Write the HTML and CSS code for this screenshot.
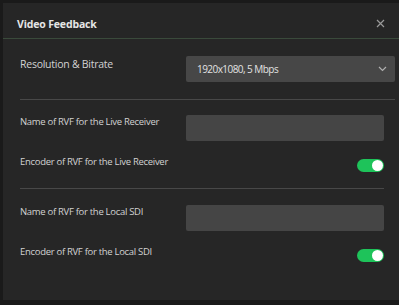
FILE: index.html
```html
<!DOCTYPE html>
<html>
<head>
<meta charset="utf-8">
<link rel="stylesheet" href="styles.css">
</head>
<body>
<div class="dialog">
  <div class="header">
    <span class="title">Video Feedback</span>
    <svg class="close" width="9" height="9" viewBox="0 0 9 9"><path d="M1 1L8 8M8 1L1 8" stroke="#9a9a9a" stroke-width="1.2" fill="none"/></svg>
  </div>
  <div class="section first">
    <div class="row">
      <span class="label big">Resolution &amp; Bitrate</span>
      <div class="select">
        <span>1920x1080, 5 Mbps</span>
        <svg width="9" height="6" viewBox="0 0 9 6"><path d="M1 1L4.5 4.5L8 1" stroke="#b0b0b0" stroke-width="1.2" fill="none"/></svg>
      </div>
    </div>
  </div>
  <div class="section">
    <div class="row">
      <span class="label">Name of RVF for the Live Receiver</span>
      <div class="input"></div>
    </div>
    <div class="row enc">
      <span class="label">Encoder of RVF for the Live Receiver</span>
      <div class="toggle"><div class="knob"></div></div>
    </div>
  </div>
  <div class="section last">
    <div class="row">
      <span class="label">Name of RVF for the Local SDI</span>
      <div class="input"></div>
    </div>
    <div class="row enc">
      <span class="label">Encoder of RVF for the Local SDI</span>
      <div class="toggle"><div class="knob"></div></div>
    </div>
  </div>
</div>
</body>
</html>
```
FILE: styles.css
```css
html, body {
  margin: 0;
  padding: 0;
  background: #1a1a1a;
  width: 399px;
  height: 305px;
  overflow: hidden;
  font-family: "Open Sans", "Noto Sans", sans-serif;
}
.dialog {
  margin: 3px 0 0 3px;
  width: 396px;
  height: 297px;
  background: #262626;
  box-sizing: border-box;
}
.header {
  border-bottom: 1px solid #3a4a3b;
  display: flex;
  align-items: center;
  justify-content: space-between;
  padding: 6px 14px 0 14px;
  box-sizing: border-box;
  height: 36px;
}
.title {
  color: #e6e6e6;
  font-weight: 700;
  font-size: 10.5px;
  letter-spacing: -0.15px;
}
.close { display: block; }
.section {
  margin: 0 15px 0 17px;
  padding: 15px 0 16px;
  border-bottom: 1px solid #484848;
}
.section.first { padding: 17px 0 17px; margin-right: 4px; }
.section.last { border-bottom: none; padding-top: 16px; }
.row {
  display: flex;
  justify-content: space-between;
  align-items: flex-start;
}
.row.enc { margin-top: 14px; }
.label {
  color: #d2d2d2;
  font-size: 9.5px;
  letter-spacing: -0.3px;
  line-height: 14px;
}
.label.big {
  font-size: 10.5px;
  letter-spacing: -0.25px;
  line-height: 16px;
}
.select {
  width: 209px;
  height: 26px;
  background: #474747;
  border-radius: 2px;
  display: flex;
  align-items: center;
  justify-content: space-between;
  padding: 0 8px 0 11px;
  box-sizing: border-box;
  color: #e2e2e2;
  font-size: 10px;
  letter-spacing: -0.55px;
}
.select svg { display: block; }
.input {
  width: 198px;
  height: 26px;
  background: #454545;
  border-radius: 2px;
}
.toggle {
  width: 27px;
  height: 13px;
  margin-top: 4px;
  background: #1ec35a;
  border-radius: 7px;
  display: flex;
  justify-content: flex-end;
  align-items: center;
  padding: 0 1px;
  box-sizing: border-box;
}
.knob {
  width: 11px;
  height: 11px;
  border-radius: 50%;
  background: #ffffff;
}
```
